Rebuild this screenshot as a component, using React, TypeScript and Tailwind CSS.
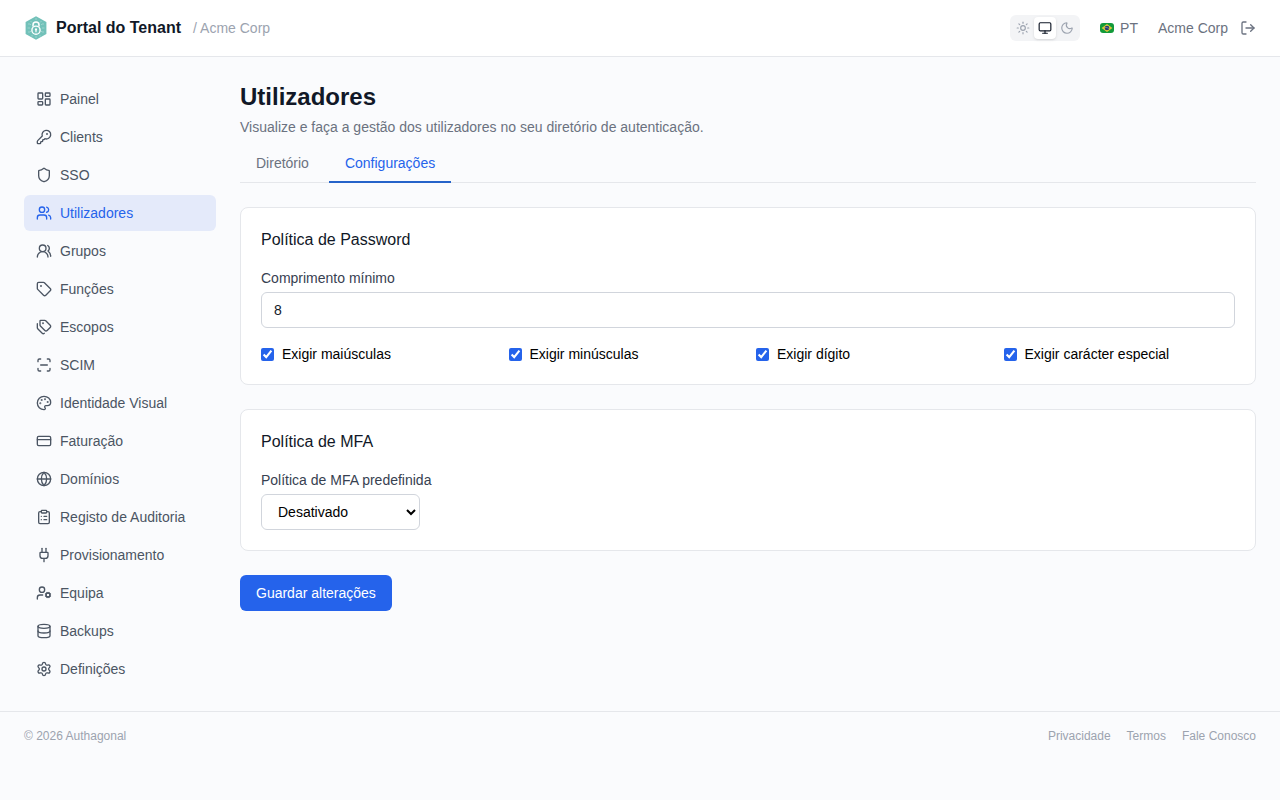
import React, { useState } from 'react';
import {
  ClipboardList,
  CreditCard,
  Database,
  Globe,
  KeyRound,
  LayoutDashboard,
  LogOut,
  Monitor,
  Moon,
  Palette,
  Plug,
  ScanLine,
  Settings,
  Shield,
  Sun,
  Tag,
  Tags,
  UserCog,
  Users,
  UsersRound,
} from 'lucide-react';

const navItems = [
  { label: 'Painel', icon: LayoutDashboard },
  { label: 'Clients', icon: KeyRound },
  { label: 'SSO', icon: Shield },
  { label: 'Utilizadores', icon: Users },
  { label: 'Grupos', icon: UsersRound },
  { label: 'Funções', icon: Tag },
  { label: 'Escopos', icon: Tags },
  { label: 'SCIM', icon: ScanLine },
  { label: 'Identidade Visual', icon: Palette },
  { label: 'Faturação', icon: CreditCard },
  { label: 'Domínios', icon: Globe },
  { label: 'Registo de Auditoria', icon: ClipboardList },
  { label: 'Provisionamento', icon: Plug },
  { label: 'Equipa', icon: UserCog },
  { label: 'Backups', icon: Database },
  { label: 'Definições', icon: Settings },
];

const themes = [
  { id: 'light', label: 'Claro', icon: Sun },
  { id: 'system', label: 'Sistema', icon: Monitor },
  { id: 'dark', label: 'Escuro', icon: Moon },
];

const rules = [
  'Exigir maiúsculas',
  'Exigir minúsculas',
  'Exigir dígito',
  'Exigir carácter especial',
];

const Logo = () => (
  <svg viewBox="0 0 24 24" className="size-6" aria-hidden="true">
    <path d="M12 0.2 22.4 6v12L12 23.8 1.6 18V6z" fill="#72c1b9" />
    <g stroke="#b9e0dc" strokeWidth="0.6" fill="none">
      <path d="M4 8h2l1 1M3.500 12h2.500M4 16h2l1-1M20 8h-2l-1 1M20.500 12H18M20 16h-2l-1-1M6.500 5l1.500 1.500M17.500 5 16 6.500M8 20.500V19M16 20.500V19M12 22v-2M12 2v2" />
    </g>
    <path d="M9 10.500V9a3 3 0 0 1 6 0v1.500" fill="none" stroke="#fff" strokeWidth="1.500" />
    <circle cx="12" cy="14.200" r="4.100" fill="#72c1b9" stroke="#fff" strokeWidth="1.400" />
    <path d="M12 12.300a1.200 1.200 0 0 1 .6 2.200v1.800h-1.200v-1.800a1.200 1.200 0 0 1 .6-2.200z" fill="#fff" />
  </svg>
);

const Flag = () => (
  <svg viewBox="0 0 14 10" className="h-[10px] w-[14px]" aria-hidden="true">
    <rect width="14" height="10" rx="3" fill="#129a3a" />
    <path d="M7 1 12.400 5 7 9 1.600 5z" fill="#d9c83a" />
    <circle cx="7" cy="5" r="2.300" fill="#2a3a6e" />
    <path d="M4.900 4.500c1.500-.2 3 .2 4.100 1.200" stroke="#aab4c8" strokeWidth="0.500" fill="none" />
  </svg>
);

const Header = () => {
  const [theme, setTheme] = useState('system');

  return (
    <header className="flex h-[57px] items-center justify-between border-b border-gray-200 bg-white px-6">
      <div className="flex items-center gap-2">
        <Logo />
        <span className="font-bold text-[#111827]">Portal do Tenant</span>
        <span className="ml-1 text-sm text-[#9ca3af]">/ Acme Corp</span>
      </div>

      <div className="flex items-center gap-5">
        <div className="flex rounded-md bg-gray-100 p-0.5">
          {themes.map(({ id, label, icon: Icon }) => (
            <button
              key={id}
              type="button"
              aria-label={label}
              onClick={() => setTheme(id)}
              className={
                theme === id
                  ? 'rounded bg-white p-1 text-[#111827] shadow-sm'
                  : 'rounded p-1 text-[#9ca3af]'
              }
            >
              <Icon size={14} />
            </button>
          ))}
        </div>
        <button type="button" className="flex items-center gap-1.5 text-sm text-[#6b7280]">
          <Flag />
          PT
        </button>
        <div className="flex items-center gap-3 text-[#6b7280]">
          <span className="text-sm">Acme Corp</span>
          <button type="button" aria-label="Sair">
            <LogOut size={16} />
          </button>
        </div>
      </div>
    </header>
  );
};

const Sidebar = () => (
  <nav className="flex w-48 shrink-0 flex-col gap-0.5">
    {navItems.map(({ label, icon: Icon }) => (
      <a
        key={label}
        href="#"
        className={
          label === 'Utilizadores'
            ? 'flex items-center gap-2 rounded-md bg-[#e4eafa] px-3 py-2 text-sm text-[#2563eb]'
            : 'flex items-center gap-2 rounded-md px-3 py-2 text-sm text-[#4b5563]'
        }
      >
        <Icon size={16} />
        {label}
      </a>
    ))}
  </nav>
);

const PasswordPolicy = () => (
  <section className="rounded-lg border border-gray-200 bg-white p-5">
    <h2 className="mb-4 text-[#111827]">Política de Password</h2>
    <label htmlFor="min-length" className="mb-1 block text-sm text-[#374151]">
      Comprimento mínimo
    </label>
    <input
      id="min-length"
      type="number"
      defaultValue={8}
      className="block h-9 w-full rounded-md border border-gray-300 bg-white px-3 text-sm text-[#111827]"
    />
    <div className="mt-4 grid grid-cols-2 gap-4 md:grid-cols-4">
      {rules.map((rule) => (
        <label key={rule} className="flex items-center gap-2 text-sm text-black">
          <input type="checkbox" defaultChecked className="accent-[#2563eb]" />
          {rule}
        </label>
      ))}
    </div>
  </section>
);

const MfaPolicy = () => (
  <section className="rounded-lg border border-gray-200 bg-white p-5">
    <h2 className="mb-4 text-[#111827]">Política de MFA</h2>
    <label htmlFor="mfa-policy" className="mb-1 block text-sm text-[#374151]">
      Política de MFA predefinida
    </label>
    <select
      id="mfa-policy"
      defaultValue="disabled"
      className="block h-9 w-[159px] rounded-md border border-gray-300 bg-white px-3 text-sm text-black"
    >
      <option value="disabled">Desativado</option>
      <option value="optional">Opcional</option>
      <option value="required">Obrigatório</option>
    </select>
  </section>
);

const App = () => {
  return (
    <div className="min-h-screen bg-[#fafbfd] font-['Liberation_Sans',Arial,sans-serif]">
      <Header />

      <div className="flex gap-6 p-6">
        <Sidebar />

        <main className="min-w-0 flex-1">
          <h1 className="text-2xl font-bold text-[#111827]">Utilizadores</h1>
          <p className="mt-1 text-sm text-[#6b7280]">
            Visualize e faça a gestão dos utilizadores no seu diretório de autenticação.
          </p>

          {/* Tabs */}
          <div role="tablist" className="mt-2 mb-6 flex gap-1 border-b border-gray-200">
            <button
              type="button"
              role="tab"
              aria-selected="false"
              className="-mb-px border-b-2 border-transparent px-4 py-2 text-sm text-[#6b7280]"
            >
              Diretório
            </button>
            <button
              type="button"
              role="tab"
              aria-selected="true"
              className="-mb-px border-b-2 border-[#2563c9] px-4 py-2 text-sm text-[#2563eb]"
            >
              Configurações
            </button>
          </div>

          <form className="flex flex-col gap-6" onSubmit={(e) => e.preventDefault()}>
            <PasswordPolicy />
            <MfaPolicy />
            <button
              type="submit"
              className="self-start rounded-md bg-[#2563eb] px-4 py-2 text-sm text-white"
            >
              Guardar alterações
            </button>
          </form>
        </main>
      </div>

      <footer className="flex items-center justify-between border-t border-gray-200 px-6 py-4 text-xs text-[#9ca3af]">
        <span>© 2026 Authagonal</span>
        <div className="flex gap-4">
          <a href="#">Privacidade</a>
          <a href="#">Termos</a>
          <a href="#">Fale Conosco</a>
        </div>
      </footer>
    </div>
  );
};

export default App;
